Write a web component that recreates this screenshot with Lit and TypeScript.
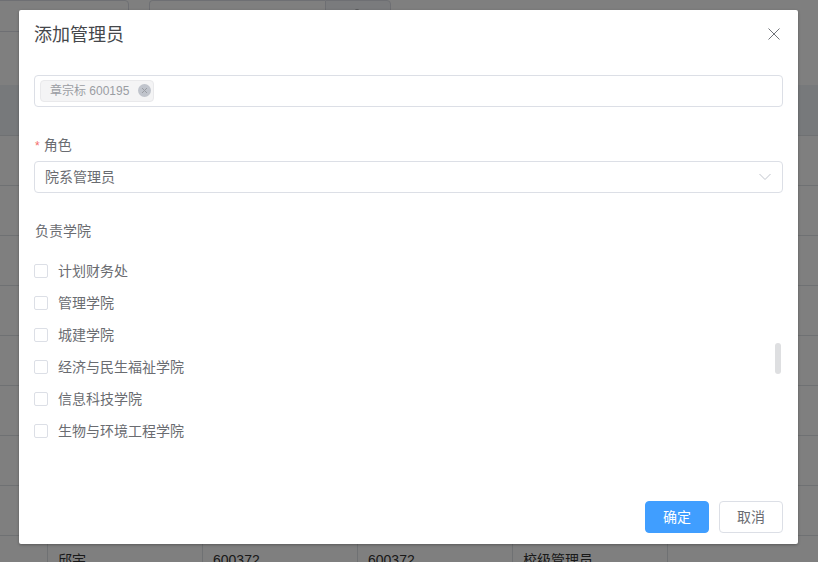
import { LitElement, html, css } from "lit";
import { customElement } from "lit/decorators.js";

const COLLEGES = ["计划财务处", "管理学院", "城建学院", "经济与民生福祉学院", "信息科技学院", "生物与环境工程学院"];
const ROW_COUNT = 8;

@customElement("app-root")
export class AppRoot extends LitElement {
  static styles = css`
    :host {
      display: block;
      position: relative;
      width: 818px;
      height: 562px;
      overflow: hidden;
      background: #fff;
      font-family: "Liberation Sans", "Noto Sans CJK SC", sans-serif;
      font-size: 14px;
      color: #6a6c71;
    }
    * { box-sizing: border-box; }

    .toolbar { display: flex; height: 32px; gap: 20px; margin-left: -20px; }
    .box { height: 32px; border: 1px solid #dcdfe6; border-radius: 4px; background: #fff; }
    .box.first { width: 149px; }
    .group { display: flex; width: 242px; }
    .group .box.main { flex: 1; border-radius: 4px 0 0 4px; border-right: 0; }
    .group .box.append {
      display: flex;
      align-items: center;
      justify-content: center;
      width: 66px;
      border-radius: 0 4px 4px 0;
      background: #f5f7fa;
    }
    .search { display: block; width: 14px; height: 14px; }

    .table { margin-top: 53px; }
    .row { display: grid; grid-template-columns: 47px repeat(4, 155px) 1fr; height: 50px; border-bottom: 1px solid #dfe2e6; }
    .row.head { height: 51px; background: #eff2f6; }
    .cell { padding-left: 10px; border-left: 1px solid #dfe2e6; line-height: 49px; color: #333; white-space: nowrap; }
    .cell:first-child { border-left: 0; }

    .overlay { position: absolute; inset: 0; background: rgba(0, 0, 0, 0.5); padding: 10px 0 0 19px; }
    .dialog {
      display: flex;
      flex-direction: column;
      width: 779px;
      height: 534px;
      padding: 0 15px 11px;
      background: #fff;
      border-radius: 2px;
      box-shadow: 0 1px 3px rgba(0, 0, 0, 0.3);
    }
    .header { display: flex; align-items: center; justify-content: space-between; height: 48px; }
    .title { font-size: 18px; color: #45474b; padding-bottom: 2px; }
    .close { display: block; width: 12px; height: 12px; margin-right: 3px; color: #707379; }

    .control { height: 32px; border: 1px solid #dcdfe6; border-radius: 4px; background: #fff; }
    .tags { display: flex; align-items: center; margin-top: 17px; padding-left: 5px; }
    .tag {
      display: flex;
      align-items: center;
      gap: 9px;
      width: 114px;
      height: 22px;
      padding-left: 9px;
      background: #f4f4f5;
      border: 1px solid #e9e9eb;
      border-radius: 4px;
      color: #9a9da3;
      font-size: 12px;
      white-space: nowrap;
    }
    .tag-text { padding-bottom: 4px; }
    .tag svg { display: block; flex: none; width: 13px; height: 13px; margin-bottom: 2px; }

    .label { height: 20px; line-height: 20px; padding-left: 1px; }
    .label.role { margin-top: 28px; }
    .label .star { color: #f56c6c; margin-right: 4px; font-size: 12px; }
    .select { display: flex; align-items: center; justify-content: space-between; margin-top: 6px; padding: 0 11px 0 10px; }
    .raised { padding-bottom: 2px; }
    .chevron { display: block; width: 12px; height: 8px; }
    .label.duty { margin-top: 28px; }

    .list { position: relative; margin-top: 14px; }
    .option { display: flex; align-items: center; gap: 10px; height: 32px; }
    .check { width: 14px; height: 14px; border: 1px solid #dcdfe6; border-radius: 2px; background: #fff; }
    .thumb { position: absolute; right: 2px; top: 88px; width: 6px; height: 31px; border-radius: 3px; background: #dedfe1; }

    .footer { display: flex; justify-content: flex-end; gap: 10px; margin-top: auto; }
    .btn { display: flex; align-items: center; justify-content: center; width: 64px; height: 32px; padding-bottom: 2px; border-radius: 4px; border: 1px solid #dcdfe6; background: #fff; color: #6a6c71; }
    .btn.primary { background: #409eff; border-color: #409eff; color: #fff; }
  `;

  render() {
    return html`
      <div class="toolbar">
        <div class="box first"></div>
        <div class="group">
          <div class="box main"></div>
          <div class="box append">
            <svg class="search" viewBox="0 0 14 14" fill="none" stroke="#606266" stroke-width="1">
              <circle cx="6" cy="6" r="5"></circle>
              <path d="M9.5 9.5 L13 13"></path>
            </svg>
          </div>
        </div>
      </div>
      <div class="table">
        <div class="row head"></div>
        ${Array.from({ length: ROW_COUNT }, () => html`<div class="row"></div>`)}
        <div class="row">
          <div class="cell"></div>
          <div class="cell">邱宇</div>
          <div class="cell">600372</div>
          <div class="cell">600372</div>
          <div class="cell">校级管理员</div>
          <div class="cell"></div>
        </div>
      </div>

      <div class="overlay">
        <div class="dialog">
          <div class="header">
            <span class="title">添加管理员</span>
            <svg class="close" viewBox="0 0 12 12" fill="none" stroke="currentColor" stroke-width="1">
              <path d="M0.5 0.5 L11.5 11.5 M11.5 0.5 L0.5 11.5"></path>
            </svg>
          </div>

          <div class="control tags">
            <span class="tag">
              <span class="tag-text">章宗标 600195</span>
              <svg viewBox="0 0 13 13">
                <circle cx="6.5" cy="6.5" r="6.5" fill="#c0c4cc"></circle>
                <path d="M4 4 L9 9 M9 4 L4 9" stroke="#9a9da3" stroke-width="1" fill="none"></path>
              </svg>
            </span>
          </div>

          <div class="label role"><span class="star">*</span>角色</div>
          <div class="control select">
            <span class="raised">院系管理员</span>
            <svg class="chevron" viewBox="0 0 12 8" fill="none" stroke="#c0c4cc" stroke-width="1">
              <path d="M0.5 1 L6 6.5 L11.5 1"></path>
            </svg>
          </div>

          <div class="label duty">负责学院</div>
          <div class="list">
            ${COLLEGES.map(
              (name) => html`<div class="option"><span class="check"></span><span class="raised">${name}</span></div>`
            )}
            <div class="thumb"></div>
          </div>

          <div class="footer">
            <div class="btn primary">确定</div>
            <div class="btn">取消</div>
          </div>
        </div>
      </div>
    `;
  }
}
